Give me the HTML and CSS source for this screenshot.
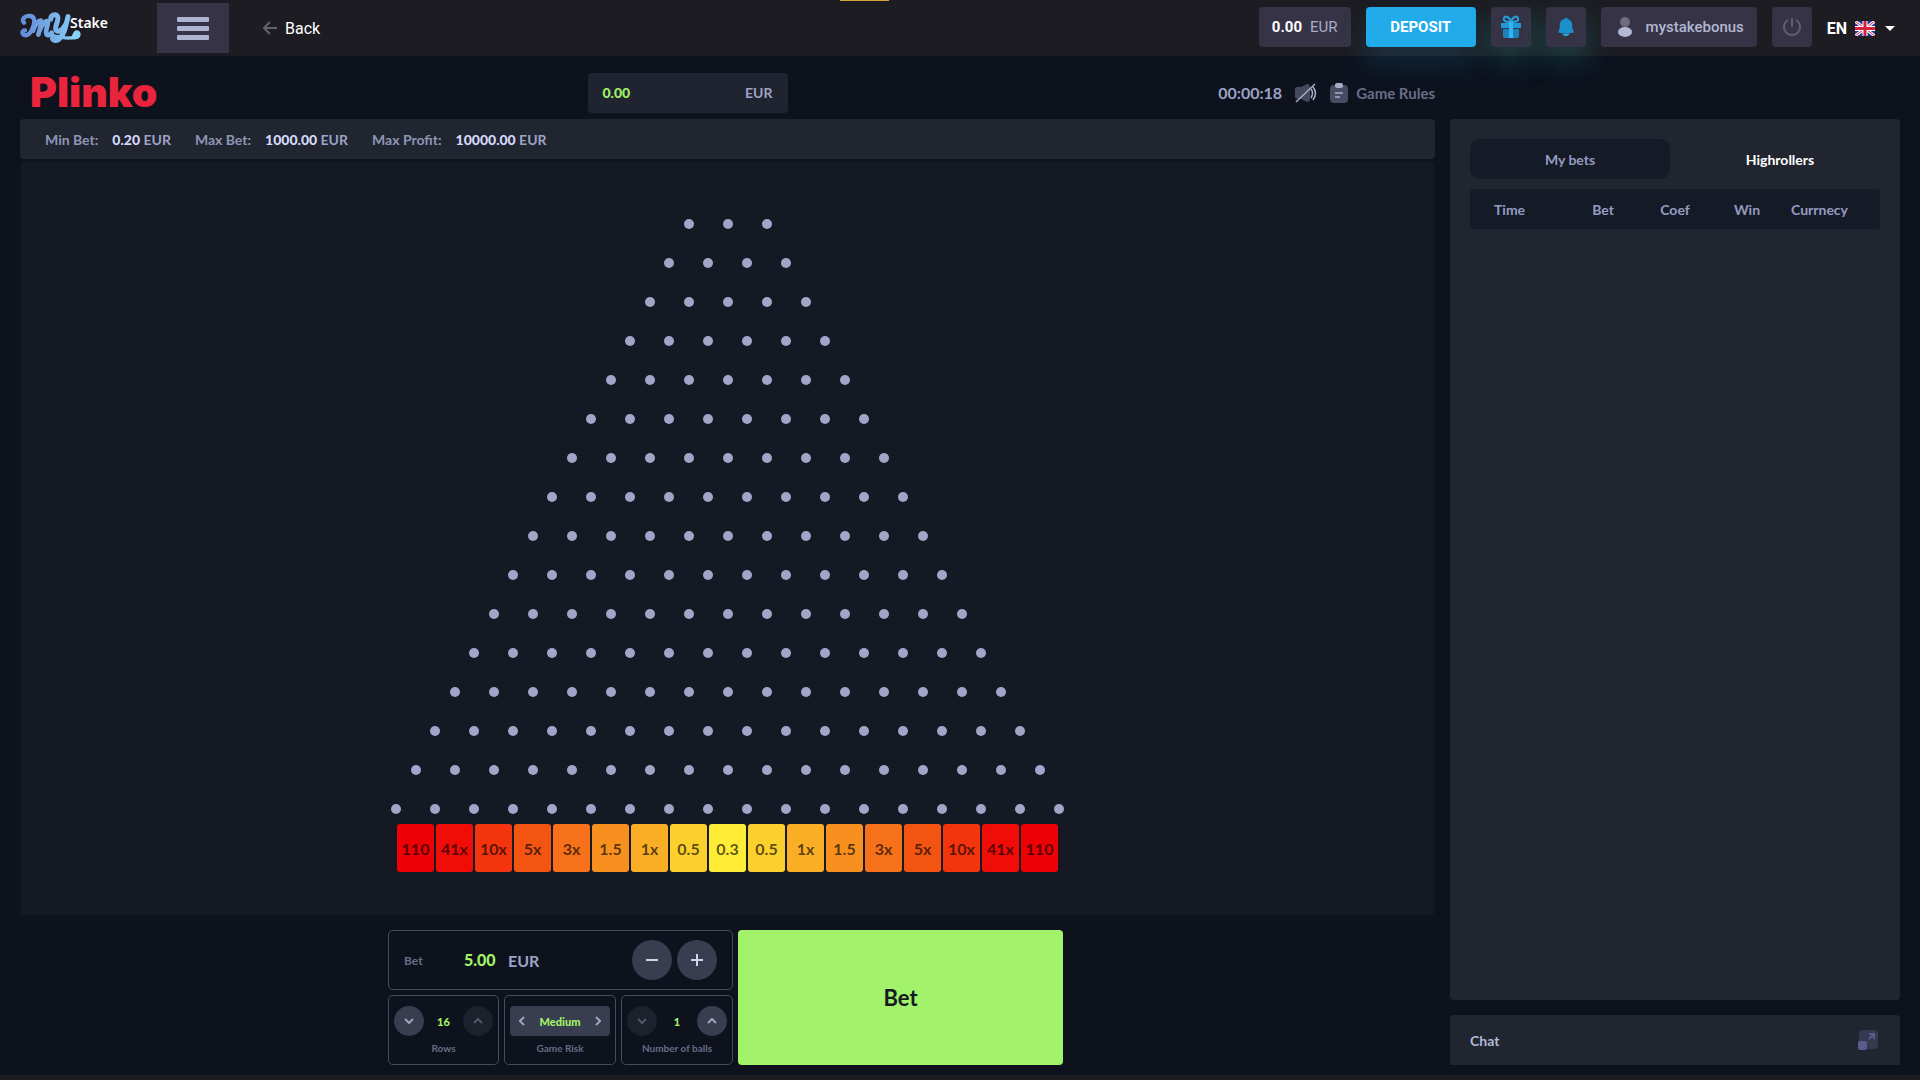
FILE: index.html
```html
<!DOCTYPE html>
<html lang="en">
<head>
<meta charset="utf-8">
<title>Plinko</title>
<link rel="stylesheet" href="styles.css">
</head>
<body>
<header class="topbar">
  <a class="brand" href="#" aria-label="MyStake">
    <svg class="brand-mark" viewBox="15 20 186 96" aria-hidden="true">
      <defs><linearGradient id="brandFill" gradientUnits="userSpaceOnUse" x1="15" y1="0" x2="195" y2="0"><stop offset="0" stop-color="#6488d8"/><stop offset="1" stop-color="#88d2f6"/></linearGradient></defs>
      <g fill="none" stroke="url(#brandFill)" stroke-linecap="round" stroke-linejoin="round">
        <path stroke-width="13" d="M27 52C18 42 30 29 46 32c15 3 14 20 7 36-7 17-16 24-25 21-8-3-7-14 2-14"/>
        <path stroke-width="14" d="M54 76C60 58 72 43 78 46c4 4-4 26-8 42M74 76C81 58 93 43 98 48c4 8-10 30-3 40 4 4 11 0 15-6"/>
        <path stroke-width="15" d="M107 42c0-14 16-18 21-8 4 10-8 26-6 38 3 12 19 5 28-12M159 34c-7 26-10 56-29 69-12 6-24-3-14-10"/>
        <path stroke-width="10" d="M116 94c14-6 34 10 58 2"/>
      </g>
      <path d="M164 100c10-2 6-22 20-25 14 0 17 16 8 23-7 5-18 6-28 2z" fill="#88d2f6"/>
    </svg>
    <span class="brand-text">Stake</span>
  </a>
  <button class="burger" type="button" aria-label="Menu"><span></span><span></span><span></span></button>
  <a class="back" href="#">
    <svg width="14" height="14" viewBox="0 0 14 14" aria-hidden="true"><path d="M7 1L1 7l6 6M1 7h13" fill="none" stroke="#62616d" stroke-width="2"/></svg>
    Back
  </a>
  <div class="loader"></div>
  <div class="account">
    <button class="chip wallet" type="button"><b>0.00</b> EUR</button>
    <button class="chip deposit" type="button">DEPOSIT</button>
    <button class="chip square glow" type="button" aria-label="Bonuses">
      <svg width="22" height="24" viewBox="0 0 22 24" aria-hidden="true">
        <path d="M10 7C6 7 3 6 4 3s6-1 7 4c1-5 6-7 7-4s-2 4-6 4" fill="none" stroke="#23a0dc" stroke-width="2"/>
        <path d="M1 8h20v5H1z" fill="#1f9ad6"/><path d="M3 14h16v7a2 2 0 0 1-2 2H5a2 2 0 0 1-2-2z" fill="#1b83ba"/>
        <path d="M9 7h4v16H9z" fill="#31b5f2"/>
      </svg>
    </button>
    <button class="chip square glow" type="button" aria-label="Notifications">
      <svg width="16" height="20" viewBox="0 0 18 22" aria-hidden="true">
        <path d="M9 0l2 2c4 1 5 4 5 8 0 3 1 5 2 7-4 2-14 2-18 0 1-2 2-4 2-7 0-4 1-7 5-8z" fill="#1d90cb"/><path d="M5 19h8c-1 3-7 3-8 0z" fill="#2aaeea"/>
      </svg>
    </button>
    <button class="chip user" type="button">
      <svg width="14" height="20" viewBox="0 0 14 20" aria-hidden="true"><circle cx="7" cy="5" r="5" fill="#6d6c80"/><ellipse cx="7" cy="15" rx="7" ry="5" fill="#b5b8d4"/></svg>
      mystakebonus
    </button>
    <button class="chip square" type="button" aria-label="Log out">
      <svg width="20" height="20" viewBox="0 0 20 20" aria-hidden="true"><path d="M6 3a8 8 0 1 0 8 0M10 1v9" fill="none" stroke="#5f5d70" stroke-width="2"/></svg>
    </button>
    <button class="language" type="button">
      EN
      <svg width="20" height="15" viewBox="0 0 20 15" aria-hidden="true">
        <path d="M0 0h20v15H0z" fill="#22389a"/><path d="M0 0l20 15M20 0L0 15" stroke="#fff" stroke-width="3"/><path d="M0 0l20 15M20 0L0 15" stroke="#d8203c" stroke-width="1"/>
        <path d="M10 0v15M0 7.500h20" stroke="#fff" stroke-width="5"/><path d="M10 0v15M0 7.500h20" stroke="#d8203c" stroke-width="3"/>
      </svg>
      <span class="caret"></span>
    </button>
  </div>
</header>

<main class="layout">
  <section class="game">
    <div class="game-head">
      <h1>Plinko</h1>
      <div class="balance"><b>0.00</b><span>EUR</span></div>
      <div class="tools">
        <time>00:00:18</time>
        <button class="sound" type="button" aria-label="Sound">
          <svg width="22" height="20" viewBox="0 0 22 20" aria-hidden="true"><path d="M0 6q0-2 2-2h4l6-3q3 0 3 3v12q0 3-3 3l-6-3H2q-2 0-2-2z" fill="#444a5e"/><path d="M16 6q3 4 0 9M18 4q5 6 0 13M1 19L20 1" fill="none" stroke="#a7abc8" stroke-width="1.500"/></svg>
        </button>
        <button class="rules" type="button">
          <svg width="18" height="20" viewBox="0 0 18 20" aria-hidden="true"><rect y="2" width="18" height="18" rx="4" fill="#474c62"/><rect x="5" width="8" height="5" rx="2" fill="#a7abc8"/><path d="M5 10h8M5 14h5" stroke="#a7abc8" stroke-width="1.500"/></svg>
          Game Rules
        </button>
      </div>
    </div>

    <dl class="limits">
      <div><dt>Min Bet:</dt><dd><b>0.20</b> EUR</dd></div>
      <div><dt>Max Bet:</dt><dd><b>1000.00</b> EUR</dd></div>
      <div><dt>Max Profit:</dt><dd><b>10000.00</b> EUR</dd></div>
    </dl>

    <div class="board">
      <div class="pegs" id="pegs"></div>
      <div class="slots">
        <span class="s8">110</span><span class="s7">41x</span><span class="s6">10x</span><span class="s5">5x</span><span class="s4">3x</span><span class="s3">1.5</span><span class="s2">1x</span><span class="s1">0.5</span><span class="s0">0.3</span><span class="s1">0.5</span><span class="s2">1x</span><span class="s3">1.5</span><span class="s4">3x</span><span class="s5">5x</span><span class="s6">10x</span><span class="s7">41x</span><span class="s8">110</span>
      </div>
    </div>

    <form class="controls">
      <div class="settings">
        <div class="box stake">
          <label for="stake">Bet</label>
          <input id="stake" type="text" value="5.00">
          <span class="currency">EUR</span>
          <button class="round large" type="button" aria-label="Decrease bet"><svg width="12" height="12" viewBox="0 0 12 12"><path d="M0 6h12"/></svg></button>
          <button class="round large" type="button" aria-label="Increase bet"><svg width="12" height="12" viewBox="0 0 12 12"><path d="M0 6h12M6 0v12"/></svg></button>
        </div>
        <div class="box option">
          <div class="stepper">
            <button class="round" type="button" aria-label="Fewer rows"><svg width="10" height="6" viewBox="0 0 10 6"><path d="M1 1l4 4 4-4"/></svg></button>
            <output>16</output>
            <button class="round" type="button" aria-label="More rows" disabled><svg width="10" height="6" viewBox="0 0 10 6"><path d="M1 5l4-4 4 4"/></svg></button>
          </div>
          <span class="caption">Rows</span>
        </div>
        <div class="box option">
          <div class="stepper risk">
            <button type="button" aria-label="Lower risk"><svg width="6" height="10" viewBox="0 0 6 10"><path d="M5 1L1 5l4 4"/></svg></button>
            <output>Medium</output>
            <button type="button" aria-label="Higher risk"><svg width="6" height="10" viewBox="0 0 6 10"><path d="M1 1l4 4-4 4"/></svg></button>
          </div>
          <span class="caption">Game Risk</span>
        </div>
        <div class="box option">
          <div class="stepper">
            <button class="round" type="button" aria-label="Fewer balls" disabled><svg width="10" height="6" viewBox="0 0 10 6"><path d="M1 1l4 4 4-4"/></svg></button>
            <output>1</output>
            <button class="round" type="button" aria-label="More balls"><svg width="10" height="6" viewBox="0 0 10 6"><path d="M1 5l4-4 4 4"/></svg></button>
          </div>
          <span class="caption">Number of balls</span>
        </div>
      </div>
      <button class="place-bet" type="button">Bet</button>
    </form>
  </section>

  <aside class="side">
    <section class="history">
      <div class="tabs">
        <button class="active" type="button">My bets</button>
        <button type="button">Highrollers</button>
      </div>
      <table>
        <thead><tr><th class="time">Time</th><th>Bet</th><th>Coef</th><th>Win</th><th class="money">Currnecy</th></tr></thead>
      </table>
    </section>
    <section class="chat">
      <h2>Chat</h2>
      <button type="button" aria-label="Open chat">
        <svg width="20" height="20" viewBox="0 0 20 20"><rect x="1" width="19" height="19" rx="4" fill="#363a50"/><rect y="11" width="9" height="9" rx="2" fill="#5b5a8c"/><path d="M11 9l5-5M11 4h5v5" fill="none" stroke="#5b5a8c" stroke-width="2"/></svg>
      </button>
    </section>
  </aside>
</main>
<footer class="strip"></footer>
<script src="board.js"></script>
</body>
</html>
```
FILE: styles.css
```css
* { box-sizing: border-box; }
body {
  margin: 0;
  min-height: 100vh;
  display: flex;
  flex-direction: column;
  background: #0d121d;
  color: #9ea3c5;
  font-family: Roboto, "Liberation Sans", sans-serif;
  font-size: 14px;
  overflow-x: hidden;
}
button { margin: 0; padding: 0; border: 0; background: none; color: inherit; font: inherit; }
button svg { display: block; }
a { color: inherit; text-decoration: none; }

/* Top bar */
.topbar {
  position: relative;
  z-index: 1;
  display: flex;
  align-items: center;
  height: 56px;
  padding: 0 20px;
  background: #1c1c22;
}
.brand { display: flex; width: 137px; }
.brand-mark { width: 62px; height: 32px; }
.brand-text {
  margin-left: -12px;
  color: #fff;
  font: 600 14px/22px "Noto Sans", sans-serif;
}
.burger {
  display: flex;
  flex-direction: column;
  align-items: center;
  justify-content: center;
  gap: 4px;
  width: 72px;
  height: 50px;
  background: #353345;
}
.burger span { width: 32px; height: 5px; border-radius: 1px; background: #adb4cf; }
.back { display: flex; align-items: center; gap: 8px; margin-left: 34px; color: #fff; font-size: 16px; }
.loader { position: absolute; top: 0; left: 840px; width: 49px; height: 1px; background: #d3a53c; }
.account { display: flex; align-items: center; gap: 15px; margin-left: auto; padding-right: 5px; }
.chip {
  display: flex;
  align-items: center;
  justify-content: center;
  height: 40px;
  margin-top: -2px;
  border-radius: 4px;
  background: #353345;
}
.wallet { gap: 8px; width: 92px; color: #a9adc9; font-size: 15px; }
.wallet b { color: #fff; }
.deposit { width: 110px; background: #22abea; color: #fff; font-size: 15px; font-weight: 700; box-shadow: 0 16px 30px #22abea28; }
.square { width: 40px; }
.glow { box-shadow: 0 12px 30px #22c0c040; }
.user { gap: 14px; width: 156px; padding-left: 4px; color: #b3b7d2; font-size: 15px; font-weight: 500; }
.language { display: flex; align-items: center; gap: 8px; color: #fff; font-size: 16px; font-weight: 700; }
.caret { margin-left: 2px; border: 5px solid transparent; border-top-color: #fff; border-bottom: 0; }

/* Page columns */
.layout {
  flex: 1;
  display: grid;
  grid-template-columns: minmax(0, 1fr) 450px;
  gap: 15px;
  padding: 0 20px 10px;
  font-family: Lato, "Open Sans", sans-serif;
  font-weight: 700;
}
.game { display: flex; flex-direction: column; }
.game-head { display: grid; grid-template-columns: 1fr 200px 1fr; align-items: center; height: 63px; }
h1 { margin: 8px 0 0 10px; color: #e8253c; font: 900 41px/48px Inter, sans-serif; }
.balance {
  display: flex;
  align-items: center;
  justify-content: space-between;
  width: 200px;
  height: 40px;
  margin: 10px 40px 0 -40px;
  padding: 0 15px;
  border-radius: 4px;
  background: #1f2430;
}
.balance b { color: #a2f067; }
.tools { display: flex; justify-content: flex-end; align-items: center; margin-top: 10px; }
.tools time { font-size: 16px; }
.sound { margin: 0 13px; }
.rules { display: flex; align-items: center; gap: 8px; color: #686d87; font-size: 15px; }

.limits {
  display: flex;
  align-items: center;
  gap: 24px;
  height: 40px;
  margin: 0;
  padding: 0 25px;
  border-radius: 4px;
  background: #202530;
}
.limits div { display: flex; gap: 14px; }
.limits dt { color: #8f95b6; }
.limits dd { margin: 0; }
.limits b { color: #d5d8fa; }

.board {
  flex: 1;
  display: flex;
  flex-direction: column;
  align-items: center;
  padding: 45px 0 42px;
  border-radius: 4px;
  background: #151924;
  box-shadow: inset 0 2px 2px #0d121d;
}
.peg-row { display: flex; justify-content: center; gap: 29px; height: 39px; align-items: center; }
.peg { width: 10px; height: 10px; border-radius: 50%; background: #a1a5c8; }
.slots { display: flex; gap: 2px; margin-top: -4px; }
.slots span {
  display: grid;
  place-items: center;
  width: 37px;
  height: 48px;
  border-radius: 3px;
  color: rgb(0 0 0 / 65%);
  font-size: 16px;
}
.s0 { background: #ffec36; }
.s1 { background: #fbcf2c; }
.s2 { background: #faae25; }
.s3 { background: #f8901f; }
.s4 { background: #f67119; }
.s5 { background: #f45412; }
.s6 { background: #f2350c; }
.s7 { background: #f00d08; }
.s8 { background: #ee0004; }

/* Bet controls */
.controls { display: flex; justify-content: center; gap: 5px; margin: 15px 0 0; padding-right: 4px; }
.settings { display: grid; grid-template-columns: 111px 112px 112px; gap: 5px; width: 345px; }
.box { border: 1px solid #484b59; border-radius: 5px; }
.stake { grid-column: 1 / -1; display: flex; align-items: center; height: 60px; padding: 0 15px; }
.stake label { width: 60px; color: #686d87; font-size: 12px; }
.stake input {
  width: 44px;
  padding: 0;
  border: 0;
  background: none;
  color: #a2f067;
  font: 900 16px/20px Lato, sans-serif;
}
.currency { flex: 1; font-size: 16px; }
.round { display: grid; place-items: center; width: 30px; height: 30px; border-radius: 50%; background: #393d50; }
.round.large { width: 40px; height: 40px; margin-left: 5px; }
.round:disabled { background: #1c212c; }
.controls svg path { fill: none; stroke: #d0d4ea; stroke-width: 2; }
.controls .stepper path { stroke: #a0a4bd; }
.controls .round:disabled path { stroke: #54586a; }
.option { height: 70px; padding: 10px 5px; text-align: center; }
.stepper { display: flex; align-items: center; justify-content: space-between; height: 30px; }
.stepper output { color: #a2f067; font-size: 11px; font-weight: 900; }
.risk { padding: 0 9px; border-radius: 4px; background: #393d50; }
.caption { display: block; margin-top: 4px; color: #686d87; font-size: 10px; line-height: 16px; }
.place-bet { width: 325px; border-radius: 4px; background: #a2f36b; color: #141b20; font-size: 22px; }

/* Sidebar */
.side { display: flex; flex-direction: column; gap: 15px; padding-top: 63px; }
.history { flex: 1; padding: 20px; border-radius: 4px; background: #202530; }
.tabs { display: grid; grid-template-columns: 1fr 1fr; gap: 10px; margin-bottom: 10px; }
.tabs button { height: 40px; border-radius: 10px; color: #fff; }
.tabs .active { background: #151b26; color: #959bc2; }
table { width: 100%; border-spacing: 0; table-layout: fixed; }
th { height: 40px; padding: 0; background: #151b26; color: #959bc2; }
.time { width: 97px; padding-left: 24px; border-radius: 4px 0 0 4px; text-align: left; }
.money { width: 97px; padding-right: 24px; border-radius: 0 4px 4px 0; }
.chat { display: flex; align-items: center; justify-content: space-between; height: 50px; padding: 0 22px 0 20px; border-radius: 4px 4px 0 0; background: #202530; }
h2 { margin: 0; color: #b5b9d5; font-size: 14px; }
.strip { height: 5px; background: #1c1c22; }
```
FILE: board.js
```js
const pegs = document.getElementById("pegs");
const rows = 16;
for (let i = 0; i < rows; i++) {
  const row = document.createElement("div");
  row.className = "peg-row";
  for (let j = 0; j < i + 3; j++) {
    const peg = document.createElement("i");
    peg.className = "peg";
    row.append(peg);
  }
  pegs.append(row);
}
```
